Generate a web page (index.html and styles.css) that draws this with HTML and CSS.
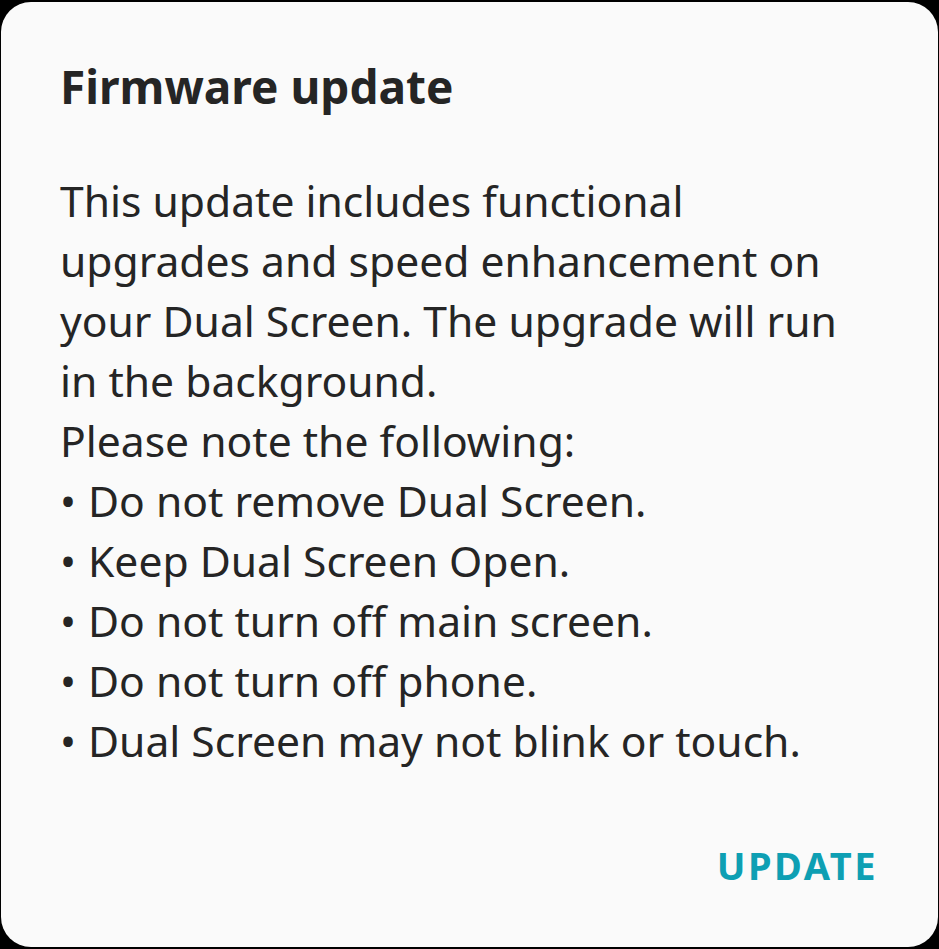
FILE: index.html
```html
<!DOCTYPE html>
<html>
<head>
<meta charset="utf-8">
<link rel="stylesheet" href="styles.css">
</head>
<body>
<div class="dialog">
  <h1 class="title">Firmware update</h1>
  <div class="body">
    <p class="para">This update includes functional upgrades and speed enhancement on your Dual Screen. The upgrade will run in the background.</p>
    <p class="para">Please note the following:</p>
    <ul class="list">
      <li>Do not remove Dual Screen.</li>
      <li>Keep Dual Screen Open.</li>
      <li>Do not turn off main screen.</li>
      <li>Do not turn off phone.</li>
      <li>Dual Screen may not blink or touch.</li>
    </ul>
  </div>
  <div class="actions">
    <button class="btn">UPDATE</button>
  </div>
</div>
</body>
</html>
```
FILE: styles.css
```css
html, body {
  margin: 0;
  padding: 0;
  background: #000;
  height: 100%;
}
body {
  padding: 2px 1px 2px 1px;
  box-sizing: border-box;
}
.dialog {
  box-sizing: border-box;
  height: 945px;
  background: #fafafa;
  border-radius: 30px;
  padding: 54px 60px 0 59px;
  font-family: "Noto Sans", sans-serif;
  color: #252525;
  display: flex;
  flex-direction: column;
}
.title {
  margin: 0;
  font-size: 46px;
  font-weight: 700;
  line-height: 60px;
}
.body {
  margin-top: 54px;
  font-size: 42.6px;
  line-height: 60px;
}
.para {
  margin: 0;
}
.list {
  margin: 0;
  padding: 0;
  list-style: none;
}
.list li::before {
  content: "\2022";
  display: inline-block;
  width: 28px;
}
.actions {
  display: flex;
  justify-content: flex-end;
  margin-top: 69px;
}
.btn {
  background: none;
  border: none;
  padding: 0;
  font-family: "Noto Sans", sans-serif;
  font-size: 38px;
  font-weight: 700;
  letter-spacing: 2.5px;
  color: #0e9fb3;
}
```
